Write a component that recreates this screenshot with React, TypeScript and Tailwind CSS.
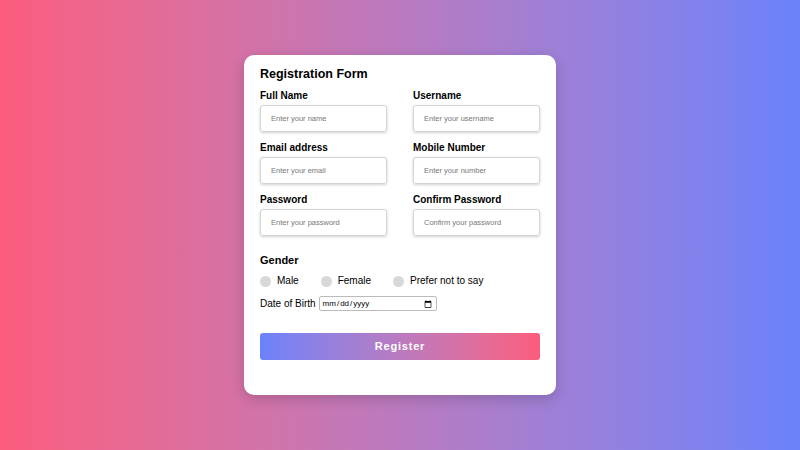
const fields = [
  { label: 'Full Name', type: 'text', placeholder: 'Enter your name' },
  { label: 'Username', type: 'text', placeholder: 'Enter your username' },
  { label: 'Email address', type: 'email', placeholder: 'Enter your email' },
  { label: 'Mobile Number', type: 'tel', placeholder: 'Enter your number' },
  { label: 'Password', type: 'password', placeholder: 'Enter your password' },
  { label: 'Confirm Password', type: 'password', placeholder: 'Confirm your password' },
]

const genders = ['Male', 'Female', 'Prefer not to say']

export default function App() {
  return (
    <div
      className="flex h-screen w-full items-center justify-center bg-gradient-to-r from-[#fc5c7d] to-[#6a82fb] text-black"
      style={{ fontFamily: '"Liberation Sans", Arial, sans-serif' }}
    >
      <form
        className="w-[312px] rounded-[10px] bg-white px-4 pt-[11px] pb-[35px] shadow-[0_4px_14px_rgba(0,0,0,0.18)]"
        onSubmit={e => e.preventDefault()}
      >
        <h2 className="text-[12.5px] font-bold leading-[16px]">Registration Form</h2>

        <div className="mt-[8px] grid grid-cols-2 gap-x-[26px] gap-y-[10px]">
          {fields.map(f => (
            <div key={f.label}>
              <label className="block text-[10px] font-bold leading-[12px]">{f.label}</label>
              <input
                type={f.type}
                placeholder={f.placeholder}
                className="mt-[3px] block h-[27px] w-full rounded-[3px] border border-[#d4d4d4] px-[10px] text-[7.5px] shadow-[0_1px_3px_rgba(0,0,0,0.18)] outline-none placeholder:text-[#777]"
              />
            </div>
          ))}
        </div>

        <div className="mt-[17px] text-[11px] font-bold leading-[14px]">Gender</div>
        <div className="mt-[7px] flex items-center gap-[22px] text-[10px] leading-[14px]">
          {genders.map(g => (
            <label key={g} className="flex items-center gap-[6px]">
              <input type="radio" name="gender" className="h-[11px] w-[11px] appearance-none rounded-full bg-[#d8d8d8]" />
              <span>{g}</span>
            </label>
          ))}
        </div>

        <div className="mt-[8px] flex items-center gap-[3px] text-[10px] leading-[15px]">
          <span>Date of Birth</span>
          <input
            type="date"
            className="h-[15px] w-[118px] rounded-[2px] border border-[#bbb] px-[2px] text-[8px] leading-[13px]"
          />
        </div>

        <button
          type="submit"
          className="mt-[22px] block h-[27px] w-full rounded-[3px] bg-gradient-to-r from-[#6a82fb] to-[#fc5c7d] text-[11px] font-bold tracking-[0.8px] text-white"
        >
          Register
        </button>
      </form>
    </div>
  )
}
